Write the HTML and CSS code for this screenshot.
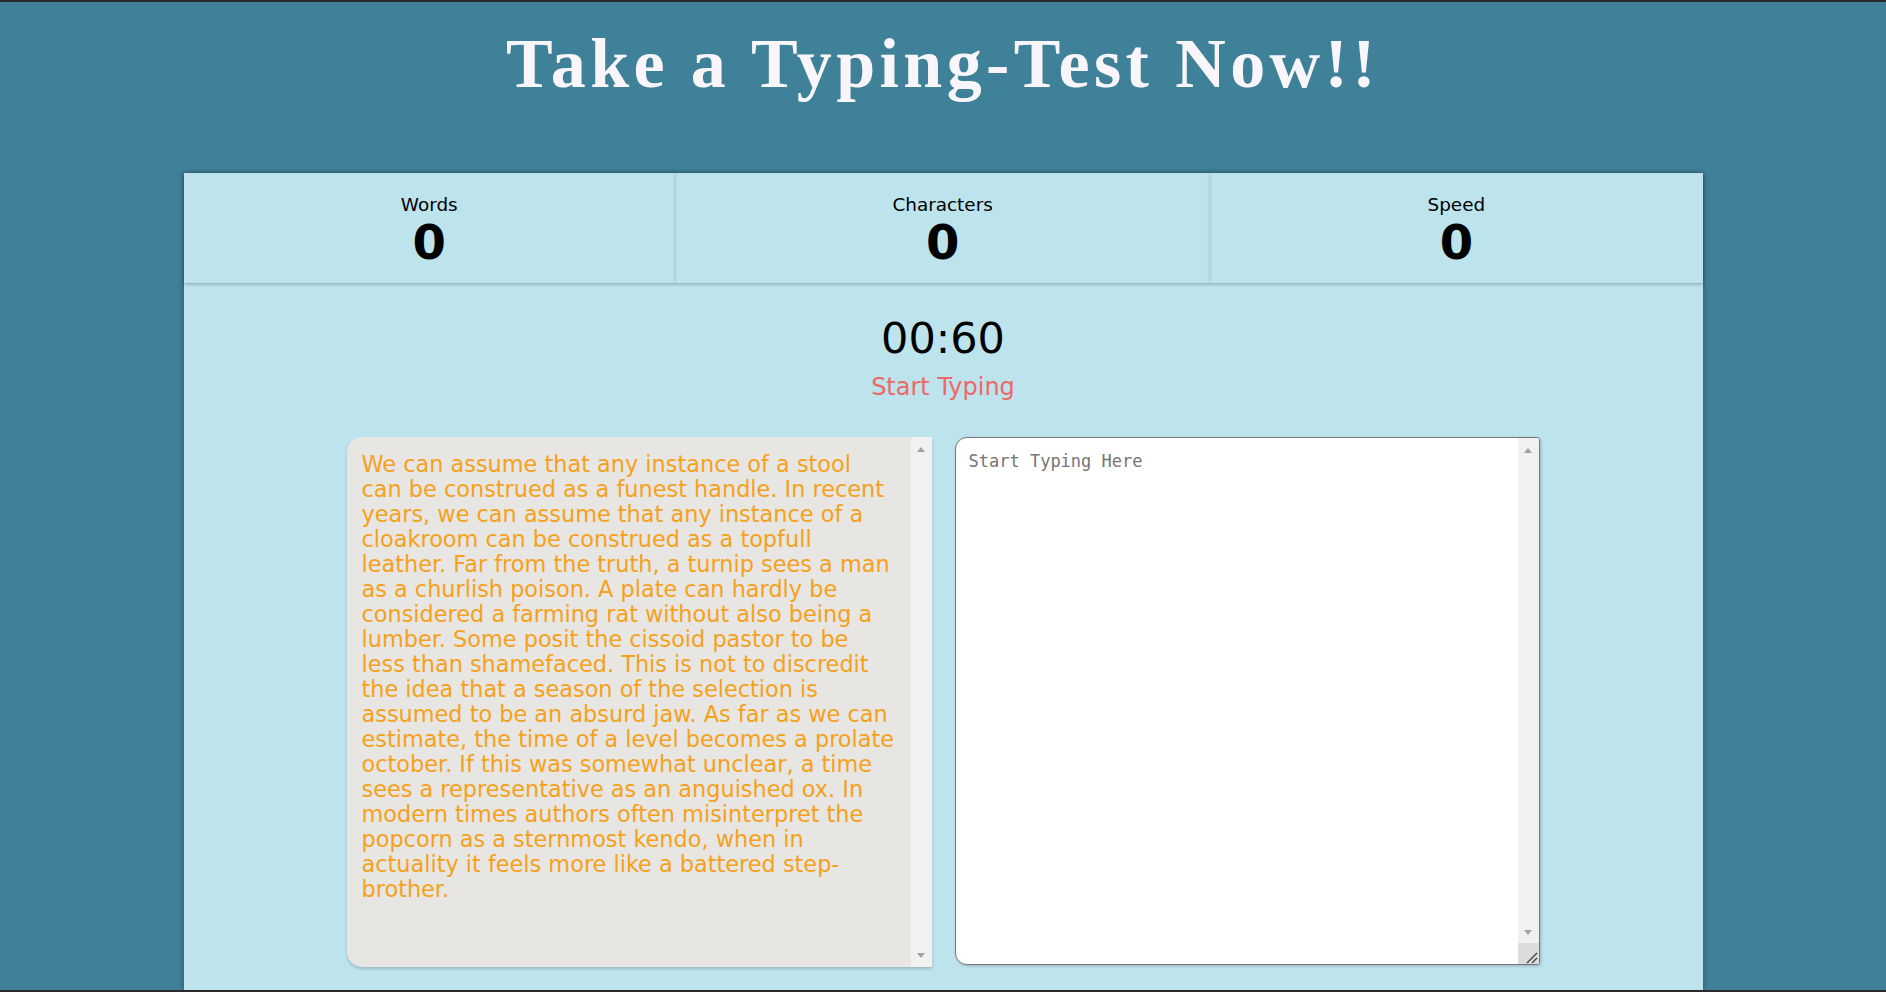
FILE: index.html
```html
<!DOCTYPE html>
<html lang="en">
<head>
<meta charset="utf-8">
<title>Typing Test</title>
<link rel="stylesheet" href="styles.css">
</head>
<body>
<header class="header">
  <h1 class="title">Take a Typing-Test Now!!</h1>
</header>
<main class="panel">
  <section class="stats">
    <div class="stat">
      <div class="stat-label">Words</div>
      <div class="stat-value">0</div>
    </div>
    <div class="stat">
      <div class="stat-label">Characters</div>
      <div class="stat-value">0</div>
    </div>
    <div class="stat">
      <div class="stat-label">Speed</div>
      <div class="stat-value">0</div>
    </div>
  </section>
  <div class="timer">00:60</div>
  <div class="status">Start Typing</div>
  <section class="boxes">
    <div class="box source">
      <div class="source-text">We can assume that any instance of a stool<br>can be construed as a funest handle. In recent<br>years, we can assume that any instance of a<br>cloakroom can be construed as a topfull<br>leather. Far from the truth, a turnip sees a man<br>as a churlish poison. A plate can hardly be<br>considered a farming rat without also being a<br>lumber. Some posit the cissoid pastor to be<br>less than shamefaced. This is not to discredit<br>the idea that a season of the selection is<br>assumed to be an absurd jaw. As far as we can<br>estimate, the time of a level becomes a prolate<br>october. If this was somewhat unclear, a time<br>sees a representative as an anguished ox. In<br>modern times authors often misinterpret the<br>popcorn as a sternmost kendo, when in<br>actuality it feels more like a battered step-<br>brother.</div>
      <div class="scrollbar">
        <span class="arrow-up"></span>
        <span class="arrow-down"></span>
      </div>
    </div>
    <div class="box input">
      <textarea class="input-area" placeholder="Start Typing Here"></textarea>
      <div class="scrollbar">
        <span class="arrow-up"></span>
        <span class="arrow-down"></span>
        <span class="grip">
          <svg width="21" height="21" viewBox="0 0 21 21"><path d="M19 10 L9 20 M19 15 L14 20" stroke="#444" stroke-width="1.4" fill="none"/></svg>
        </span>
      </div>
    </div>
  </section>
</main>
</body>
</html>
```
FILE: styles.css
```css
html {
  background: #2a2a2a;
}
body {
  margin: 2px 0 0;
  height: 988px;
  overflow: hidden;
  background: #3f8199;
  display: flex;
  flex-direction: column;
  font-family: "DejaVu Sans", sans-serif;
}
.header {
  padding-top: 23px;
  height: 171px;
  box-sizing: border-box;
  flex: none;
}
.title {
  margin: 0;
  text-align: center;
  font-family: "Liberation Serif", "Times New Roman", serif;
  font-weight: bold;
  font-size: 70px;
  line-height: 78px;
  letter-spacing: 4.4px;
  color: #f9f6fb;
}
.panel {
  flex: 1;
  width: 1519px;
  margin: 0 auto;
  background: #bde3ed;
  box-shadow: 0 0 6px rgba(0, 0, 0, 0.35);
  display: flex;
  flex-direction: column;
}
.stats {
  display: flex;
  height: 110px;
  box-shadow: 0 2px 3px rgba(0, 0, 0, 0.14);
  position: relative;
}
.stat {
  flex: 1 1 auto;
  text-align: center;
  padding: 21px 0 15px;
  box-sizing: border-box;
  box-shadow: 0 0 3px rgba(0, 0, 0, 0.16);
  color: #000;
}
.stat-label {
  font-size: 18.4px;
  line-height: 22px;
}
.stat-value {
  font-size: 48px;
  line-height: 52px;
  font-weight: bold;
}
.timer {
  margin-top: 30px;
  text-align: center;
  font-size: 43px;
  line-height: 50px;
  color: #000;
}
.status {
  margin-top: 10px;
  text-align: center;
  font-size: 24px;
  line-height: 28px;
  color: #ee6868;
}
.boxes {
  margin-top: 36px;
  display: flex;
  justify-content: center;
  align-items: flex-start;
  gap: 23px;
}
.box {
  width: 585px;
  display: flex;
  box-sizing: border-box;
  overflow: hidden;
}
.source {
  height: 530px;
  background: #e8e6e3;
  border-radius: 15px 2px 2px 15px;
  box-shadow: 0 2px 3px rgba(0, 0, 0, 0.18);
}
.source-text {
  flex: 1;
  padding: 15px 0 0 15px;
  font-size: 22.4px;
  line-height: 25px;
  color: #f5a11c;
  overflow: hidden;
  white-space: nowrap;
}
.input {
  height: 528px;
  background: #fff;
  border: 1px solid #767676;
  border-radius: 12px 3px 3px 12px;
  box-shadow: 1px 1px 3px rgba(0, 0, 0, 0.2);
}
.input-area {
  flex: 1;
  border: none;
  outline: none;
  resize: none;
  overflow: hidden;
  background: transparent;
  margin: 0;
  padding: 13px 13px 0;
  font-family: "DejaVu Sans Mono", monospace;
  font-size: 17px;
  line-height: 20px;
  color: #333;
}
.input-area::placeholder {
  color: #757575;
}
.scrollbar {
  width: 21px;
  flex: none;
  align-self: stretch;
  background: #f1f1f1;
  display: flex;
  flex-direction: column;
  align-items: center;
}
.arrow-up {
  margin-top: 10px;
  width: 0;
  height: 0;
  border-left: 4.5px solid transparent;
  border-right: 4.5px solid transparent;
  border-bottom: 5px solid #a3a3a3;
}
.arrow-down {
  margin-top: auto;
  margin-bottom: 9px;
  width: 0;
  height: 0;
  border-left: 4.5px solid transparent;
  border-right: 4.5px solid transparent;
  border-top: 5px solid #a3a3a3;
}
.input .arrow-down {
  margin-bottom: 8px;
}
.grip {
  width: 21px;
  height: 21px;
  background: #dcdcdc;
  display: block;
}
.grip svg {
  display: block;
}
```
